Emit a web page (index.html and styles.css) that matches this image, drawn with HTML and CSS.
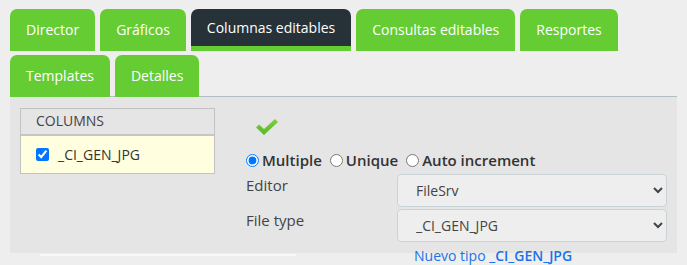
FILE: index.html
```html
<!DOCTYPE html>
<html lang="es">
<head>
  <meta charset="UTF-8">
  <title>Columnas editables</title>
  <link rel="stylesheet" href="styles.css">
</head>
<body>
  <div class="tabs">
    <div class="tab">Director</div>
    <div class="tab">Gráficos</div>
    <div class="tab active">Columnas editables</div>
    <div class="tab">Consultas editables</div>
    <div class="tab">Resportes</div>
    <div class="tab">Templates</div>
    <div class="tab">Detalles</div>
  </div>
  <div class="panel">
    <div class="columns">
      <div class="columns-head">COLUMNS</div>
      <label class="columns-row"><input type="checkbox" checked> _CI_GEN_JPG</label>
    </div>
    <div class="editor">
      <svg class="ok" width="24" height="18" viewBox="0 0 24 18">
        <defs>
          <linearGradient id="g" x1="0" y1="0" x2="0" y2="1">
            <stop offset="0" stop-color="#7ad23a"/>
            <stop offset="1" stop-color="#5bb82a"/>
          </linearGradient>
        </defs>
        <path d="M1 9.5 L4 6.5 L9 11 L20 1 L23 4 L9 17 Z" fill="url(#g)"/>
      </svg>
      <div class="modes">
        <label><input type="radio" name="mode" checked> Multiple</label>
        <label><input type="radio" name="mode"> Unique</label>
        <label><input type="radio" name="mode"> Auto increment</label>
      </div>
      <div class="fields">
        <span class="lbl">Editor</span>
        <select><option>FileSrv</option></select>
        <span class="lbl">File type</span>
        <select><option>_CI_GEN_JPG</option></select>
        <span></span>
        <a class="new-type" href="#">Nuevo tipo <b>_CI_GEN_JPG</b></a>
      </div>
    </div>
  </div>
  <div class="scroll"></div>
</body>
</html>
```

FILE: styles.css
```css
html {
  background: #eeeeee;
}
body {
  margin: 0;
  min-height: 265px;
  padding: 9px 10px 0;
  box-sizing: border-box;
  background: #eeeeee;
  font-family: "Open Sans", sans-serif;
  color: #333;
}
.tabs {
  display: flex;
  flex-wrap: wrap;
  gap: 4px 5px;
  width: 620px;
}
.tab {
  height: 42px;
  padding: 0 16px;
  box-sizing: border-box;
  background: #66cc33;
  color: #fff;
  font-size: 14px;
  line-height: 42px;
  border-radius: 7px 7px 0 0;
}
.tab.active {
  background: #263238;
  border-bottom: 5px solid #66cc33;
  line-height: 37px;
}
.panel {
  display: flex;
  gap: 31px;
  height: 157px;
  padding: 11px 10px 0;
  box-sizing: border-box;
  width: 667px;
  background: #e5e5e5;
  border-top: 1px solid #b0bec5;
  margin-top: -1px;
}
.columns {
  width: 195px;
  height: 66px;
  box-sizing: border-box;
  border: 1px solid #c2c2c2;
  font-size: 14px;
}
.columns-head {
  height: 27px;
  line-height: 24px;
  padding-left: 15px;
  border-bottom: 2px solid #c6c6c6;
  box-sizing: border-box;
  color: #444;
}
.columns-row {
  display: flex;
  align-items: center;
  height: 37px;
  padding-left: 15px;
  background: #ffffe0;
  color: #333;
  gap: 9px;
}
.columns-row input {
  margin: 0;
  width: 13px;
  height: 13px;
}
.editor {
  flex: 1;
}
.ok {
  display: block;
  margin: 10px 0 0 9px;
}
.modes {
  display: flex;
  gap: 8px;
  margin-top: 14px;
  font-size: 15px;
  font-weight: 600;
  color: #333;
}
.modes label {
  display: flex;
  align-items: center;
  gap: 3px;
}
.modes input {
  margin: 0;
  width: 13px;
  height: 13px;
}
.fields {
  display: grid;
  grid-template-columns: 151px 270px;
  row-gap: 2px;
  margin-top: 4px;
  font-size: 15px;
  color: #444;
}
.lbl {
  line-height: 22px;
}
select {
  height: 33px;
  padding: 0 14px;
  font-family: "Open Sans", sans-serif;
  font-size: 14px;
  color: #444;
  background: #eeeeee;
  border: 1px solid #c9d3d8;
  border-radius: 4px;
}
.new-type {
  margin: 3px 0 0 17px;
  font-size: 14px;
  line-height: 18px;
  color: #1a73e8;
  text-decoration: none;
}
.new-type b {
  font-weight: 600;
}
.scroll {
  margin: 1px 0 0 30px;
  width: 256px;
  height: 2px;
  background: #f8f8f8;
}
```
